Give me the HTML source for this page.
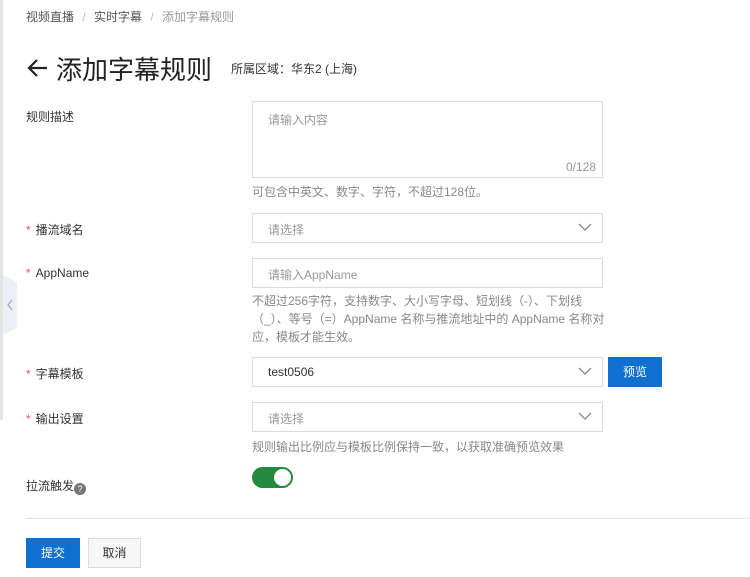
<!DOCTYPE html>
<html><head><meta charset="utf-8"><style>
*{box-sizing:border-box;margin:0;padding:0}
body{width:750px;height:577px;overflow:hidden;background:#fff;font-family:"Liberation Sans","Noto Sans CJK SC",sans-serif;color:#333;font-size:12px;position:relative}
.a{position:absolute;white-space:nowrap}
.box{position:absolute;border:1px solid #dcdcdc;background:#fff}
.ph{color:#999;font-size:12px}
.hint{color:#888;font-size:12px}
.req{color:#e55;margin-right:5px}
.chev{position:absolute;right:10px;top:8px}
</style></head><body>
<div class="a" style="left:0;top:0;width:3px;height:420px;background:#e4e4e4"></div>
<div class="a" style="left:3px;top:275px;width:14px;height:60px;background:#eceff3;clip-path:polygon(0 0,100% 12%,100% 88%,0 100%)"></div>
<svg class="a" style="left:6px;top:299px" width="8" height="12"><path d="M6 1L2 6l4 5" fill="none" stroke="#aaa" stroke-width="1.2"/></svg>

<div class="a" style="left:26px;top:8px;color:#555">视频直播 <span style="color:#bbb;margin:0 5px">/</span> 实时字幕 <span style="color:#bbb;margin:0 5px">/</span> <span style="color:#999">添加字幕规则</span></div>

<svg class="a" style="left:26px;top:58px" width="22" height="20"><path d="M21 10H3M11 2L3 10l8 8" fill="none" stroke="#222" stroke-width="2.2"/></svg>
<div class="a" style="left:56px;top:50px;font-size:26px;color:#222">添加字幕规则</div>
<div class="a" style="left:231px;top:60px;font-size:12px;color:#333">所属区域：华东2 (上海)</div>

<div class="a" style="left:26px;top:108px">规则描述</div>
<div class="box" style="left:252px;top:101px;width:351px;height:77px"></div>
<div class="a ph" style="left:268px;top:111px">请输入内容</div>
<div class="a ph" style="left:566px;top:160px">0/128</div>
<div class="a hint" style="left:252px;top:183px">可包含中英文、数字、字符，不超过128位。</div>

<div class="a" style="left:26px;top:221px"><span class="req">*</span>播流域名</div>
<div class="box" style="left:252px;top:213px;width:351px;height:30px"><svg class="chev" width="14" height="10"><path d="M1 2l6 6 6-6" fill="none" stroke="#888" stroke-width="1.3"/></svg></div>
<div class="a ph" style="left:268px;top:221px">请选择</div>

<div class="a" style="left:26px;top:266px"><span class="req">*</span>AppName</div>
<div class="box" style="left:252px;top:258px;width:351px;height:30px"></div>
<div class="a ph" style="left:268px;top:266px">请输入AppName</div>
<div class="a hint" style="left:252px;top:292px;line-height:18px">不超过256字符，支持数字、大小写字母、短划线（-）、下划线<br>（_）、等号（=）AppName 名称与推流地址中的 AppName 名称对<br>应，模板才能生效。</div>

<div class="a" style="left:26px;top:365px"><span class="req">*</span>字幕模板</div>
<div class="box" style="left:252px;top:357px;width:351px;height:30px"><svg class="chev" width="14" height="10"><path d="M1 2l6 6 6-6" fill="none" stroke="#888" stroke-width="1.3"/></svg></div>
<div class="a" style="left:268px;top:365px;color:#333">test0506</div>
<div class="a" style="left:608px;top:357px;width:54px;height:30px;background:#0f70d1;color:#fff;text-align:center;line-height:30px">预览</div>

<div class="a" style="left:26px;top:410px"><span class="req">*</span>输出设置</div>
<div class="box" style="left:252px;top:402px;width:351px;height:30px"><svg class="chev" width="14" height="10"><path d="M1 2l6 6 6-6" fill="none" stroke="#888" stroke-width="1.3"/></svg></div>
<div class="a ph" style="left:268px;top:410px">请选择</div>
<div class="a hint" style="left:252px;top:438px">规则输出比例应与模板比例保持一致，以获取准确预览效果</div>

<div class="a" style="left:26px;top:477px">拉流触发<span style="display:inline-block;width:12px;height:12px;border-radius:6px;background:#777;color:#fff;font-size:9px;line-height:12px;text-align:center;vertical-align:-2px">?</span></div>
<div class="a" style="left:252px;top:467px;width:41px;height:21px;border-radius:11px;background:#22893e"></div>
<div class="a" style="left:274px;top:469px;width:17px;height:17px;border-radius:9px;background:#fff"></div>

<div class="a" style="left:26px;top:518px;width:724px;height:1px;background:#e2e2e2"></div>
<div class="a" style="left:26px;top:538px;width:54px;height:30px;background:#0f70d1;color:#fff;text-align:center;line-height:30px">提交</div>
<div class="a" style="left:88px;top:538px;width:53px;height:30px;background:#f7f7f7;border:1px solid #dcdcdc;color:#333;text-align:center;line-height:28px">取消</div>
</body></html>
